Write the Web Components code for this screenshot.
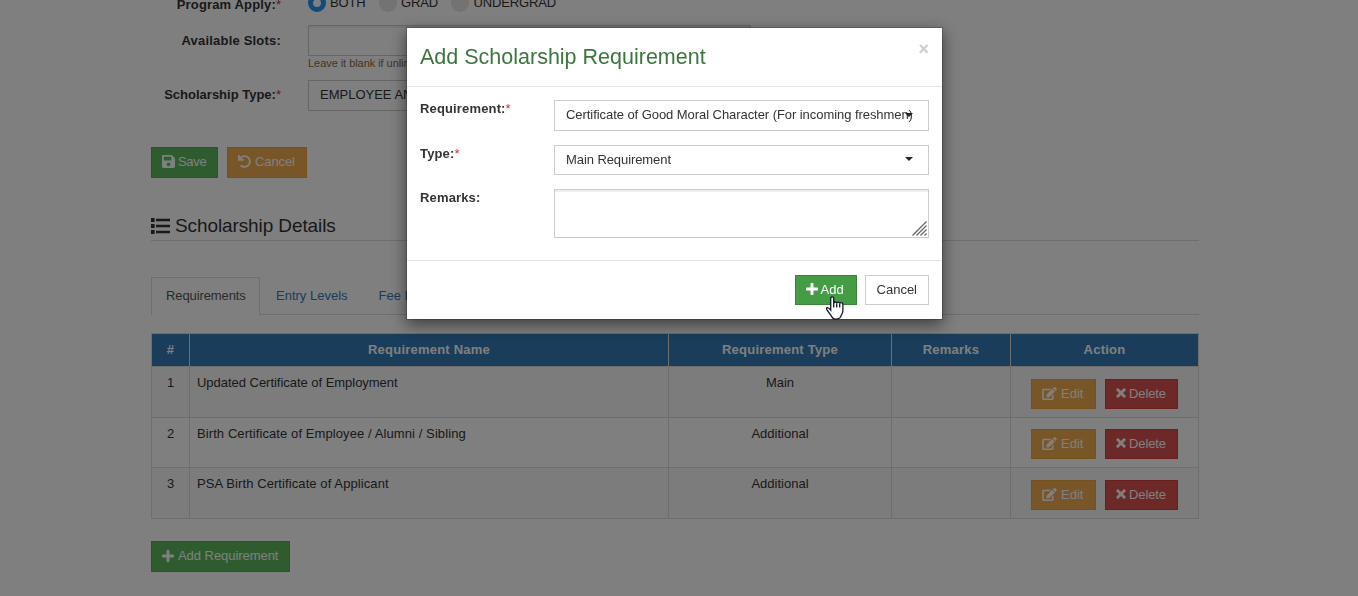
<!DOCTYPE html>
<html lang="en">
<head>
<meta charset="utf-8">
<title>Scholarship</title>
<style>
  body {
    margin: 0;
    height: 596px;
    overflow: hidden;
    background: #fff;
    color: #333;
    font: 13px/18.57px "Liberation Sans", Arial, sans-serif;
  }
</style>
</head>
<body>
<scholarship-page></scholarship-page>

<script>
const icons = {
  save: ['0 32 448 448', '<path d="M433.941 129.941l-83.882-83.882A48 48 0 0 0 316.118 32H48C21.49 32 0 53.49 0 80v352c0 26.51 21.49 48 48 48h352c26.51 0 48-21.49 48-48V163.882a48 48 0 0 0-14.059-33.941zM224 416c-35.346 0-64-28.654-64-64s28.654-64 64-64 64 28.654 64 64-28.654 64-64 64zm96-304.52V212c0 6.627-5.373 12-12 12H76c-6.627 0-12-5.373-12-12V108c0-6.627 5.373-12 12-12h228.52c3.183 0 6.235 1.264 8.485 3.515l3.48 3.48A11.996 11.996 0 0 1 320 111.48z"/>'],
  undo: ['0 0 512 512', '<path d="M212.333 224.333H12c-6.627 0-12-5.373-12-12V12C0 5.373 5.373 0 12 0h48c6.627 0 12 5.373 12 12v78.112C117.773 39.279 184.260 7.470 258.175 8.007c136.906.994 246.448 111.623 246.157 248.532C504.041 393.258 393.120 504 256.333 504c-64.089 0-122.496-24.313-166.510-64.215-5.099-4.622-5.334-12.554-.467-17.420l33.967-33.967c4.474-4.474 11.662-4.717 16.401-.525C170.760 415.336 211.580 432 256.333 432c97.268 0 176-78.716 176-176 0-97.267-78.716-176-176-176-58.496 0-110.280 28.476-142.274 72.333h98.274c6.627 0 12 5.373 12 12v48c0 6.627-5.373 12-12 12z"/>'],
  list: ['0 0 19 16', '<path d="M0 0h3.600v4H0zM0 6h3.600v4H0zM0 12h3.600v4H0zM5 .8h14v2.500H5zM5 6.800h14v2.500H5zM5 12.800h14v2.500H5z"/>'],
  plus: ['0 0 12 12', '<path d="M5.300 0h1.400q.8 0 .8.8v3.700h3.700q.8 0 .8.8v1.400q0 .8-.8.8H7.500v3.700q0 .8-.8.8H5.300q-.8 0-.8-.8V7.500H.8Q0 7.500 0 6.700V5.300Q0 4.500.8 4.500h3.700V.8q0-.8.8-.8z"/>'],
  times: ['0 0 10 10', '<path d="M2.300.3L5 3 7.700.3q.4-.4.8 0l1.200 1.200q.4.4 0 .8L7 5l2.700 2.700q.4.4 0 .8L8.500 9.700q-.4.4-.8 0L5 7 2.300 9.700q-.4.4-.8 0L.3 8.500q-.4-.4 0-.8L3 5 .3 2.300q-.4-.4 0-.8L1.500.3q.4-.4.8 0z"/>'],
  edit: ['0 0 576 512', '<path d="M402.600 83.200l90.200 90.200c3.800 3.800 3.800 10 0 13.800L274.400 405.600l-92.800 10.300c-12.400 1.400-22.900-9.100-21.500-21.500l10.300-92.800L388.800 83.200c3.800-3.800 10-3.800 13.800 0zm162-22.900l-48.800-48.800c-15.200-15.200-39.900-15.200-55.200 0l-35.400 35.400c-3.800 3.800-3.800 10 0 13.800l90.200 90.200c3.800 3.800 10 3.800 13.800 0l35.400-35.400c15.200-15.300 15.200-40 0-55.200zM384 346.200V448H64V128h229.800c3.200 0 6.200-1.300 8.500-3.500l40-40c7.600-7.600 2.200-20.500-8.500-20.500H48C21.500 64 0 85.500 0 112v352c0 26.500 21.500 48 48 48h352c26.500 0 48-21.500 48-48V306.200c0-10.700-12.900-16-20.500-8.500l-40 40c-2.200 2.300-3.500 5.300-3.500 8.500z"/>'],
  resize: ['0 0 15 15', '<path d="M.5 14.500l14-14M4.500 14.500l10-10M8.500 14.500l6-6M12.500 14.500l2-2" fill="none" stroke="#666" stroke-width="1.300"/>'],
  hand: ['0 0 20 24', '<path d="M5.700 14V2.500Q5.700.8 7.200.8t1.500 1.700v5q.1-1.500 1.500-1.500t1.500 1.400q.2-1.200 1.500-1.200t1.500 1.500q.2-1 1.400-1 1.800 0 1.800 1.900v6q0 2.600-1.800 4.900-.5 3.600-5.300 3.600-3 0-3.900-2.300L2 13.900q-1-1.900.2-2.300 1.300-.4 3.500 2.400z" fill="#fff" stroke="#15152a" stroke-width="1.300"/><path d="M8.700 7v4.500M11.700 7.500v4M14.700 8v3.500" fill="none" stroke="#15152a" stroke-width="1.300"/>'],
};

function define(name, template) {
  customElements.define(name, class extends HTMLElement {
    constructor() {
      super();
      const shadowRoot = this.attachShadow({ mode: 'open' });
      shadowRoot.innerHTML = template;
    }
  });
}

class UiIcon extends HTMLElement {
  constructor() {
    super();
    this.attachShadow({ mode: 'open' });
  }

  connectedCallback() {
    const [viewBox, shape] = icons[this.getAttribute('name')];
    const width = this.getAttribute('width');
    const height = this.getAttribute('height');

    this.shadowRoot.innerHTML = `
      <style>
        :host { display: block; flex: none; }
        svg { display: block; fill: currentColor; overflow: visible; }
      </style>
      <svg viewBox="${viewBox}" width="${width}" height="${height}">${shape}</svg>
    `;
  }
}

customElements.define('ui-icon', UiIcon);

define('ui-button', `
  <style>
    :host {
      display: flex;
      align-items: center;
      gap: 3px;
      box-sizing: border-box;
      height: 31px;
      padding: 0 11px;
      border: 1px solid #ccc;
      background: #fff;
      white-space: nowrap;
    }
    :host([kind]) { padding: 0 0 0 10px; color: #fff; }
    :host([kind=success]) { background: #5cb85c; border-color: #4cae4c; }
    :host([kind=warning]) { gap: 4px; background: #f0ad4e; border-color: #eea236; }
    :host([kind=danger]) { background: #d9534f; border-color: #d43f3a; letter-spacing: -.1px; }
    :host([kind=active]) { background: #449d44; border-color: #398439; }
    ::slotted(ui-icon) { margin-bottom: 2px; }
  </style>
  <slot></slot>
`);

define('radio-option', `
  <style>
    :host { display: flex; align-items: center; gap: 4px; }
    i { box-sizing: border-box; width: 18px; height: 18px; border-radius: 50%; background: #e6e6e6; }
    :host([checked]) i { border: 5px solid #2196f3; background: #fff; }
  </style>
  <i></i><slot></slot>
`);

define('form-row', `
  <style>
    :host { display: flex; }
    .label {
      flex: none;
      box-sizing: border-box;
      width: var(--label-width, 130px);
      padding-top: var(--label-top, 6px);
      text-align: var(--label-align, right);
      font-weight: bold;
    }
    .control { width: 443px; margin-left: 27px; }
    :host([modal]) .control { width: 375px; margin-left: 0; }
    ::slotted(em) { color: #c9302c; font-style: normal; font-weight: normal; letter-spacing: 0; }
  </style>
  <div class="label"><slot name="label"></slot><slot name="star"></slot></div>
  <div class="control"><slot></slot></div>
`);

define('text-field', `
  <style>
    :host {
      display: flex;
      justify-content: flex-end;
      align-items: flex-end;
      box-sizing: border-box;
      height: 31px;
      padding: 1px;
      border: 1px solid #ccc;
      box-shadow: inset 0 2px 0 #eee;
    }
  </style>
  <slot></slot>
`);

define('select-box', `
  <style>
    :host {
      display: grid;
      align-items: center;
      box-sizing: border-box;
      height: 31px;
      padding: 0 15px 0 11px;
      border: 1px solid #ccc;
      white-space: nowrap;
    }
    span, i { grid-area: 1 / 1; }
    i {
      justify-self: end;
      margin-bottom: 2px;
      border: 4px solid transparent;
      border-top-color: #222;
      border-bottom: 0;
    }
  </style>
  <span><slot></slot></span><i></i>
`);

define('detail-tabs', `
  <style>
    :host { display: flex; gap: 1px; height: 37px; border-bottom: 1px solid #ddd; }
    ::slotted(a) {
      box-sizing: border-box;
      height: 38px;
      padding: 9px 14px 0;
      border: 1px solid transparent;
      color: #337ab7;
    }
    ::slotted(.active) {
      width: 109px;
      border-color: #ddd;
      border-bottom: 0;
      background: #fff;
      color: #555;
      letter-spacing: -.1px;
    }
  </style>
  <slot></slot>
`);

class RequirementTable extends HTMLElement {
  constructor() {
    super();
    this.attachShadow({ mode: 'open' });
  }

  connectedCallback() {
    const rows = [
      ['Updated Certificate of Employment', 'Main'],
      ['Birth Certificate of Employee / Alumni / Sibling', 'Additional'],
      ['PSA Birth Certificate of Applicant', 'Additional'],
    ];
    const headings = ['#', 'Requirement Name', 'Requirement Type', 'Remarks', 'Action'];

    this.shadowRoot.innerHTML = `
      <style>
        :host { display: block; }
        .table {
          display: grid;
          grid-template-columns: 38px 479px 223px 119px 188px;
          grid-template-rows: 33px 51px 50px 51px;
          border: solid #ddd;
          border-width: 1px 0 0 1px;
        }
        .table > div {
          box-sizing: border-box;
          padding-top: 7px;
          border: solid #ddd;
          border-width: 0 1px 1px 0;
          text-align: center;
        }
        .table > .head { background: #337ab7; color: #fff; font-weight: bold; letter-spacing: .22px; }
        .table > .name { padding-left: 7px; text-align: left; letter-spacing: .09px; }
        .table > .name.first { letter-spacing: -.03px; }
        .odd { background: #f9f9f9; }
        .table > .actions { display: flex; gap: 9px; padding: 12px 0 0 20px; }
        .even.actions { padding-top: 11px !important; }
        ui-button { width: 65px; height: 30px; }
        ui-button[kind=danger] { width: 73px; }
      </style>
      <div class="table">
        ${headings.map(text => `<div class="head">${text}</div>`).join('')}
        ${rows.map(([name, type], i) => {
          const stripe = i % 2 ? 'even' : 'odd';
          return `
            <div class="${stripe}">${i + 1}</div>
            <div class="${stripe} name ${i ? '' : 'first'}">${name}</div>
            <div class="${stripe}">${type}</div>
            <div class="${stripe}"></div>
            <div class="${stripe} actions">
              <ui-button kind="warning"><ui-icon name="edit" width="15" height="13"></ui-icon>Edit</ui-button>
              <ui-button kind="danger"><ui-icon name="times" width="10" height="10"></ui-icon>Delete</ui-button>
            </div>`;
        }).join('')}
      </div>
    `;
  }
}

customElements.define('requirement-table', RequirementTable);

define('modal-dialog', `
  <style>
    :host {
      position: fixed;
      inset: 0;
      display: block;
      background: rgba(0, 0, 0, .5);
    }
    .dialog {
      width: 535px;
      height: 291px;
      margin: 27px 0 0 406px;
      border: 1px solid rgba(0, 0, 0, .2);
      background: #fff;
      background-clip: padding-box;
      box-shadow: 0 5px 15px rgba(0, 0, 0, .5);
    }
    header {
      display: flex;
      justify-content: space-between;
      box-sizing: border-box;
      height: 59px;
      padding: 14px 13px 0;
      border-bottom: 1px solid #e5e5e5;
    }
    h4 { margin: 0; color: #3c763d; font: 21.5px/30px "Liberation Sans", Arial, sans-serif; }
    .close { color: #ccc; font-size: 18px; font-weight: bold; line-height: 15px; }
    .body {
      display: flex;
      flex-direction: column;
      gap: 14px;
      box-sizing: border-box;
      height: 173px;
      padding: 13px;
      --label-width: 134px;
      --label-align: left;
      --label-top: 0;
    }
    footer {
      display: flex;
      justify-content: flex-end;
      gap: 8px;
      padding: 14px 13px;
      border-top: 1px solid #e5e5e5;
    }
  </style>
  <div class="dialog">
    <header><h4><slot name="title"></slot></h4><span class="close">×</span></header>
    <div class="body"><slot></slot></div>
    <footer><slot name="footer"></slot></footer>
  </div>
`);

define('mouse-pointer', `
  <style>:host { position: fixed; left: 825px; top: 296px; }</style>
  <ui-icon name="hand" width="20" height="24"></ui-icon>
`);

define('scholarship-page', `
  <style>
    :host { display: block; }
    main { width: 1048px; margin-left: 151px; }
    .radios { display: flex; gap: 13.5px; height: 18px; margin-top: -6px; letter-spacing: -.15px; }
    .program { --label-top: 0; height: 25px; }
    .program [slot] { position: relative; top: -4px; }
    .program span { letter-spacing: .15px; }
    .slots { height: 55px; --label-top: 7px; }
    .slots span { letter-spacing: .2px; }
    .type { height: 67px; --label-top: 6px; }
    small { display: block; color: #8a6d3b; font-size: 11px; line-height: 15px; letter-spacing: -.05px; }
    .buttons { display: flex; gap: 9px; }
    .save { width: 67px; letter-spacing: -.3px; }
    .cancel { width: 80px; letter-spacing: -.1px; }
    h3 {
      display: flex;
      align-items: center;
      gap: 5px;
      box-sizing: border-box;
      height: 29px;
      margin: 34px 0 36px;
      border-bottom: 1px solid #ddd;
      font: 19px/28px "Liberation Sans", Arial, sans-serif;
      letter-spacing: -.1px;
    }
    detail-tabs { margin-bottom: 18px; }
    .add { display: flex; margin-top: 22px; }
    .add ui-button { width: 139px; gap: 4px; letter-spacing: -.05px; }
    modal-dialog ui-button { height: 30px; }
    modal-dialog text-field { height: 49px; }
    modal-dialog span[slot=label] { letter-spacing: .15px; }
    modal-dialog ui-button[kind] { width: 62px; }
    .good { letter-spacing: -.06px; }
    .short { height: 30px; letter-spacing: -.08px; }
  </style>
  <main>
    <form-row class="program">
      <span slot="label">Program Apply:</span><em slot="star">*</em>
      <div class="radios">
        <radio-option checked>BOTH</radio-option>
        <radio-option>GRAD</radio-option>
        <radio-option>UNDERGRAD</radio-option>
      </div>
    </form-row>
    <form-row class="slots">
      <span slot="label">Available Slots:</span>
      <text-field></text-field>
      <small>Leave it blank if unlimited</small>
    </form-row>
    <form-row class="type">
      <span slot="label">Scholarship Type:</span><em slot="star">*</em>
      <select-box>EMPLOYEE AND DEPENDENT</select-box>
    </form-row>
    <div class="buttons">
      <ui-button class="save" kind="success"><ui-icon name="save" width="13" height="13"></ui-icon>Save</ui-button>
      <ui-button class="cancel" kind="warning"><ui-icon name="undo" width="13" height="13"></ui-icon>Cancel</ui-button>
    </div>
    <h3><ui-icon name="list" width="19" height="16"></ui-icon>Scholarship Details</h3>
    <detail-tabs>
      <a class="active">Requirements</a>
      <a>Entry Levels</a>
      <a>Fee Inclusions</a>
    </detail-tabs>
    <requirement-table></requirement-table>
    <div class="add">
      <ui-button kind="success"><ui-icon name="plus" width="12" height="12"></ui-icon>Add Requirement</ui-button>
    </div>
  </main>
  <modal-dialog>
    <span slot="title">Add Scholarship Requirement</span>
    <form-row modal>
      <span slot="label">Requirement:</span><em slot="star">*</em>
      <select-box class="good">Certificate of Good Moral Character (For incoming freshmen)</select-box>
    </form-row>
    <form-row modal>
      <span slot="label">Type:</span><em slot="star">*</em>
      <select-box class="short">Main Requirement</select-box>
    </form-row>
    <form-row modal>
      <span slot="label">Remarks:</span>
      <text-field><ui-icon name="resize" width="15" height="15"></ui-icon></text-field>
    </form-row>
    <ui-button slot="footer" kind="active"><ui-icon name="plus" width="12" height="12"></ui-icon>Add</ui-button>
    <ui-button slot="footer">Cancel</ui-button>
  </modal-dialog>
  <mouse-pointer></mouse-pointer>
`);
</script>
</body>
</html>
